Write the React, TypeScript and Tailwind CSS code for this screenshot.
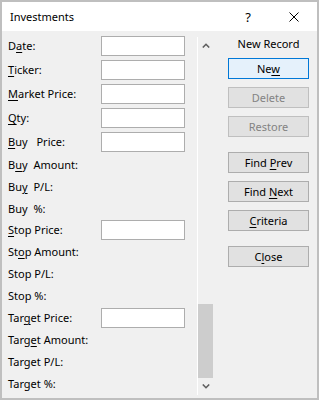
import React from "react";

const U = ({ children }: { children: React.ReactNode }) => (
    <span className="underline decoration-1 underline-offset-[2px]">{children}</span>
);

type Row = { label: React.ReactNode; box?: boolean; h: string };

const rows: Row[] = [
    { label: <>D<U>a</U>te:</>, box: true, h: "h-6" },
    { label: <><U>T</U>icker:</>, box: true, h: "h-6" },
    { label: <><U>M</U>arket Price:</>, box: true, h: "h-6" },
    { label: <><U>Q</U>ty:</>, box: true, h: "h-6" },
    { label: <><U>B</U>uy <span className="ml-[6px]">Price:</span></>, box: true, h: "h-6" },
    { label: <>B<U>u</U>y <span className="ml-[3px]">Amount:</span></>, h: "h-[22px]" },
    { label: <>Bu<U>y</U> <span className="ml-[3px]">P/L:</span></>, h: "h-[22px]" },
    { label: <>Buy <span className="ml-[3px]">%:</span></>, h: "h-[21px]" },
    { label: <><U>S</U>top Price:</>, box: true, h: "h-[22px]" },
    { label: <>St<U>o</U>p Amount:</>, h: "h-[22px]" },
    { label: <>Stop P/L:</>, h: "h-[22px]" },
    { label: <>Stop %:</>, h: "h-[22px]" },
    { label: <>Tar<U>g</U>et Price:</>, box: true, h: "h-[22px]" },
    { label: <>Targ<U>e</U>t Amount:</>, h: "h-[22px]" },
    { label: <>Target P/L:</>, h: "h-[22px]" },
    { label: <>Target %:</>, h: "h-[22px]" },
];

const Btn = ({ children, mt, primary, disabled }: { children: React.ReactNode; mt: string; primary?: boolean; disabled?: boolean }) => (
    <div
        className={`${mt} w-[81px] h-[21px] flex items-center justify-center border ${
            primary
                ? "border-[#0078d7] bg-[#e5f1fb] text-black"
                : disabled
                ? "border-[#bfbfbf] bg-[#e1e1e1] text-[#838383]"
                : "border-[#adadad] bg-[#e1e1e1] text-black"
        }`}
    >
        <span className="whitespace-nowrap">{children}</span>
    </div>
);

const App = () => {
    return (
        <div className="w-[319px] h-[400px] border-2 border-[#bfbfbf] flex flex-col font-['Noto_Sans',sans-serif] text-[11px] leading-[14px] text-black">
            <div className="h-[29px] shrink-0 bg-white flex items-center">
                <span className="pl-[8px] text-[11px]">Investments</span>
                <span className="ml-auto mr-[38px] text-[13px]">?</span>
                <svg width="10" height="10" viewBox="0 0 10 10" className="mr-[18px]">
                    <path d="M0.5 0.5L9.5 9.5M9.5 0.5L0.5 9.5" stroke="#000" strokeWidth="1" />
                </svg>
            </div>
            <div className="flex-1 bg-[#f0f0f0] flex">
                <div className="w-[195px] pt-[3px] flex flex-col">
                    {rows.map((r, i) => (
                        <div key={i} className={`flex items-center ${r.h}`}>
                            <div className="w-[99px] pl-[6px] whitespace-nowrap">{r.label}</div>
                            {r.box && <div className="w-[84px] h-5 border border-[#adadad] bg-white" />}
                        </div>
                    ))}
                </div>
                <div className="mt-[6px] mb-[3px] w-px bg-white" />
                <div className="mt-[6px] mb-[3px] w-[15px] flex flex-col">
                    <div className="h-[17px] flex items-center justify-center">
                        <svg width="8" height="5" viewBox="0 0 8 5">
                            <path d="M0.8 4.5L4 1.3L7.2 4.5" stroke="#606060" strokeWidth="1.6" fill="none" />
                        </svg>
                    </div>
                    <div className="flex-1 flex flex-col justify-end">
                        <div className="h-[74px] bg-[#cdcdcd]" />
                    </div>
                    <div className="h-[17px] flex items-center justify-center">
                        <svg width="8" height="5" viewBox="0 0 8 5">
                            <path d="M0.8 0.5L4 3.7L7.2 0.5" stroke="#606060" strokeWidth="1.6" fill="none" />
                        </svg>
                    </div>
                </div>
                <div className="ml-[15px] w-[81px] flex flex-col items-center">
                    <div className="mt-[6px] h-[14px] whitespace-nowrap">New Record</div>
                    <Btn mt="mt-[7px]" primary>Ne<U>w</U></Btn>
                    <Btn mt="mt-[8px]" disabled>Delete</Btn>
                    <Btn mt="mt-[8px]" disabled>Restore</Btn>
                    <Btn mt="mt-[15px]">Find <U>P</U>rev</Btn>
                    <Btn mt="mt-[8px]">Find <U>N</U>ext</Btn>
                    <Btn mt="mt-[8px]"><U>C</U>riteria</Btn>
                    <Btn mt="mt-[15px]">C<U>l</U>ose</Btn>
                </div>
            </div>
        </div>
    );
};

export default App;
